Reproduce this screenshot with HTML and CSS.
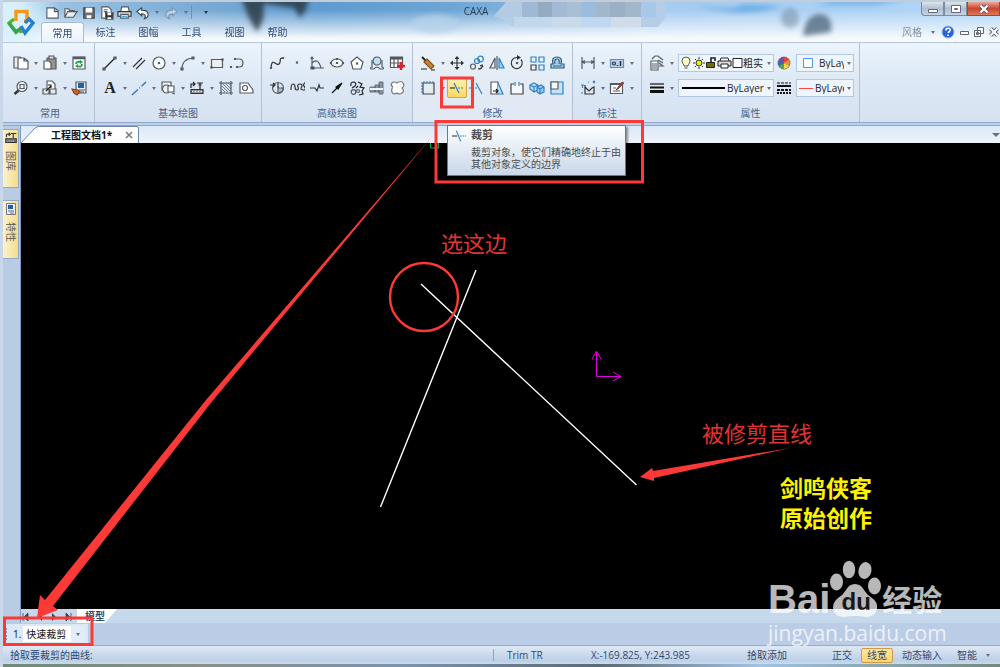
FILE: index.html
```html
<!DOCTYPE html>
<html lang="zh-CN">
<head>
<meta charset="utf-8">
<title>CAXA</title>
<link rel="stylesheet" href="styles.css">
</head>
<body>
<header class="titlebar">
  <svg class="sky" aria-hidden="true">
    <defs><filter id="soft"><feGaussianBlur stdDeviation="2.500"/></filter></defs>
    <g filter="url(#soft)">
      <path d="M238 -4h68l-3 12-6 8-6-10-30-4-1 16-6 12-8-14z" fill="#27343f" opacity=".8"/>
      <path d="M690 2q40 8 50 0l40 2q-40 14-90-2zM812 3h60l30-5h-70z" fill="#6fb0e6"/>
      <ellipse cx="787" cy="16" rx="9" ry="10" fill="#7d93a8" opacity=".6"/>
      <path d="M800 34q2-22 18-22 12 2 10 18z" fill="#4b6278" opacity=".75"/>
      <ellipse cx="432" cy="22" rx="24" ry="9" fill="#b5d2ea" opacity=".8"/>
    </g>
  </svg>
  <button class="logo" aria-label="菜单">
    <svg width="28" height="28" viewBox="0 0 28 28" fill="none" stroke-width="3.4">
      <path d="M9 13V3.500h11V13M17 13h4" stroke="#f39a1c"/><path d="M7 11l-5 4 7 9 5-4M14 20v5" stroke="#55b233"/><path d="M2 15l7 9 5-4" stroke="#3aa449"/><path d="M14 18l4 7 8-10-4-4-4 4" stroke="#2581d0"/>
    </svg>
  </button>
  <div class="head-rows">
    <div class="title-row">
      <div class="qat">
        <button aria-label="新建"><svg class="i" viewBox="0 0 16 16"><path d="M2 3h8l4 3v8H2zM10 3v4h4" fill="#fff"/></svg></button>
        <button aria-label="打开"><svg class="i" viewBox="0 0 16 16"><path d="M2 13V4h4l1 2h5v2M2 13l3-6h10l-4 6z" fill="#eee"/></svg></button>
        <button aria-label="保存"><svg class="i" viewBox="0 0 16 16"><path d="M3 3h11v11H3z" fill="#6b6f78" stroke="#3b4149"/><path d="M5 3h7v5H5zM6 11h5v3H6z" fill="#fff" stroke="none"/></svg></button>
        <button aria-label="另存为"><svg class="i" viewBox="0 0 16 16"><path d="M3 2h7l3 3v9H3zM5 5h4M5 7h4" fill="#fff"/><path d="M7 8h8v7H7z" fill="#333"/><path d="M9 8h4v3H9zM9 13h4v2H9z" fill="#fff" stroke="none"/></svg></button>
        <button aria-label="打印"><svg class="i" viewBox="0 0 16 16"><path d="M4 7l1-5h7l1 5" fill="#fff"/><path d="M1 7h14v5H1z" fill="#ddd" stroke="#333"/><path d="M4 10h8v4H4z" fill="#fff"/><path d="M5 12h6" stroke="#39c"/></svg></button>
        <button aria-label="撤销"><svg class="i" viewBox="0 0 16 16"><path d="M2 7l5-4v2.500c5 0 7 2 7 5 0 2-2 4-4 4 2-3 1-5-3-5v2z" fill="#fff" stroke="#3d4650"/></svg></button>
        <button class="drop" aria-label="撤销列表"></button>
        <button aria-label="重做"><svg class="i" viewBox="0 0 16 16"><path d="M14 7L9 3v2.500c-5 0-7 2-7 5 0 2 2 4 4 4-2-3-1-5 3-5v2z" fill="#b9d3ea" stroke="#7d97b0"/></svg></button>
        <button class="drop" aria-label="重做列表"></button>
        <span class="qat-end"></span>
        <button class="drop more" aria-label="自定义快速访问"></button>
      </div>
      <div class="title"><span>CAXA</span>
        <svg class="mosaic" width="176" height="25" aria-hidden="true">
          <path d="M2 14L14 0h160v15l-8 10H22L8 16z" fill="#b5cde6"/>
          <path d="M14 0h16v15H2z" fill="#b4cbe4"/><path d="M30 0h16v15H30z" fill="#9fb9d4"/><path d="M46 0h14v15H46z" fill="#95abc1"/><path d="M60 0h15v15H60z" fill="#a2bad6"/><path d="M75 0h14v15H75z" fill="#a9bfd3"/><path d="M89 0h15v15H89z" fill="#9bbddd"/><path d="M104 0h14v15h-14z" fill="#a2b7cc"/><path d="M118 0h15v15h-15z" fill="#9bb0c5"/><path d="M133 0h16v15h-16z" fill="#a3b7cb"/><path d="M149 0h15v15h-15z" fill="#a8c8e9"/>
          <path d="M22 15h38v10H22z" fill="#c2d7ea"/><path d="M60 15h29v10H60z" fill="#cbdae8"/><path d="M89 15h30v10H89z" fill="#bfd8ef"/><path d="M119 15h30v10h-30z" fill="#d0dde8"/>
        </svg>
      </div>
      <div class="win">
        <button aria-label="最小化"><svg width="12" height="10"><path d="M1.500 5.500h9v3h-9z" fill="#fff" stroke="#667"/></svg></button>
        <button aria-label="最大化"><svg width="12" height="10"><path d="M1.500 1.500h9v7h-9z" fill="#fff" stroke="#667"/><path d="M4.500 4.500h3v1h-3z" stroke="#667" fill="none"/></svg></button>
        <button class="close" aria-label="关闭"><svg width="12" height="10"><path d="M2.500 1.500l7 7M9.500 1.500l-7 7" stroke="#656" stroke-width="4"/><path d="M2.500 1.500l7 7M9.500 1.500l-7 7" stroke="#fff" stroke-width="2"/></svg></button>
      </div>
    </div>
    <div class="tab-row">
      <nav class="tabs">
        <button class="on">常用</button><button>标注</button><button>图幅</button><button>工具</button><button>视图</button><button>帮助</button>
      </nav>
      <div class="tab-tools">
        <button class="style">风格</button><button class="drop" aria-label="风格列表"></button>
        <button aria-label="帮助"><svg width="14" height="14" viewBox="0 0 14 14"><circle cx="7" cy="7" r="6" fill="#2b62d4" stroke="#8db4e8"/><path d="M4.800 5.500c0-3 4.500-3 4.500-.5 0 1.500-2 1.500-2 3M7 9.500v1.500" stroke="#fff" stroke-width="1.600" fill="none"/></svg></button>
        <button aria-label="最小化文档"><svg width="12" height="12" fill="#fff" stroke="#5c6675"><path d="M2.500 5.500h8v3h-8z"/></svg></button>
        <button aria-label="还原文档"><svg width="12" height="12" fill="#fff" stroke="#5c6675"><path d="M4.500 1.500h6v6h-6zM1.500 4.500h6v6h-6zM3.500 6.500h2v2h-2z"/></svg></button>
        <button aria-label="关闭文档"><svg width="12" height="12"><path d="M2.500 2.500l7 7M9.500 2.500l-7 7" stroke="#5c6675" stroke-width="4"/><path d="M2.500 2.500l7 7M9.500 2.500l-7 7" stroke="#fff" stroke-width="2"/></svg></button>
      </div>
    </div>
  </div>
</header>

<section class="ribbon">
  <div class="group first">
    <div class="row">
      <button aria-label="复制"><svg class="i" viewBox="0 0 16 16"><path d="M1 2h6l2 2v9H1z" fill="#eee"/><path d="M5 3h6l4 3v8H5zM11 3v3h4" fill="#fff"/></svg></button><button class="drop" aria-label="复制选项"></button>
      <button aria-label="粘贴"><svg class="i" viewBox="0 0 16 16"><path d="M5 3h9v11H5z" fill="#9a948c"/><path d="M7 1h5v3H7z" fill="#ddd"/><path d="M2 6h5l2 2v6H2z" fill="#fff"/></svg></button><button class="drop" aria-label="粘贴选项"></button>
      <button aria-label="刷新"><svg class="i" viewBox="0 0 16 16"><path d="M2 2h12v12H2z" fill="#fff"/><path d="M2 3h12" stroke-width="2.500"/><path d="M5 9q0-3 5-2M11 9q0 4-5 2" stroke="#18a04a" stroke-width="1.800"/><path d="M9 5l3 2-3 2zM7 9l-3 2 3 2z" fill="#18a04a" stroke="none"/></svg></button>
    </div>
    <div class="row">
      <button aria-label="缩放"><svg class="i" viewBox="0 0 16 16"><circle cx="9" cy="6.500" r="5" fill="#f4f8fc"/><path d="M7 4.500h4v4H7z"/><path d="M5.500 10.500L1.500 14" stroke="#333" stroke-width="2.500"/></svg></button><button class="drop" aria-label="缩放选项"></button>
      <button aria-label="平移"><svg class="i" viewBox="0 0 16 16"><path d="M5 1h5l3 3v6H5z" fill="#fff"/><path d="M1 9h6v5H1zM8 9h6v5H8z" fill="#e8e8e8"/><path d="M4 11l5-5M6 5h3v3" stroke="#222"/></svg></button><button class="drop" aria-label="平移选项"></button>
      <button aria-label="特性匹配"><svg class="i" viewBox="0 0 16 16"><path d="M5 2h10v11H5z" fill="#e7edf5"/><path d="M7 3h6v5H7z" fill="#23629f" stroke="none"/><path d="M8 10h6M9 12h4"/><path d="M1 9l6 1 2 2-3 3-3-2z" fill="#c26a2b" stroke="#8a431a"/></svg></button>
    </div>
    <div class="label">常用</div>
  </div>
  <div class="group">
    <div class="row">
      <button aria-label="直线"><svg class="i" viewBox="0 0 16 16"><path d="M2 14L13 3" stroke="#222"/><path d="M1 13h2v2H1zM12 2h2v2h-2z" fill="#555"/></svg></button><button class="drop" aria-label="直线选项"></button>
      <button aria-label="平行线"><svg class="i" viewBox="0 0 16 16"><path d="M2 12L11 3M5 14l9-9" stroke="#333"/></svg></button>
      <button aria-label="圆"><svg class="i" viewBox="0 0 16 16"><circle cx="8" cy="8" r="6" fill="#f8fafc"/><path d="M7.500 7.500h1v1h-1z" fill="#333"/></svg></button><button class="drop" aria-label="圆选项"></button>
      <button aria-label="圆弧"><svg class="i" viewBox="0 0 16 16"><path d="M2 14Q2 4 13 3"/><path d="M1 13h2v2H1zM12 2h2v2h-2z" fill="#555"/></svg></button><button class="drop" aria-label="圆弧选项"></button>
      <button aria-label="矩形"><svg class="i" viewBox="0 0 16 16"><path d="M2.500 4.500h11v8h-11z" fill="#eee"/><path d="M2 12h1v1H2zM13 4h1v1h-1z" fill="#444" stroke="#444"/></svg></button>
      <button aria-label="多段线"><svg class="i" viewBox="0 0 16 16"><path d="M6 4h4q4 0 4 4t-4 4H8"/><path d="M5.500 3.500h1v1h-1zM1.500 11.500h1v1h-1zM7.500 11.500h1v1h-1z" fill="#555"/></svg></button>
    </div>
    <div class="row">
      <button class="text-tool" aria-label="文字">A</button><button class="drop" aria-label="文字选项"></button>
      <button aria-label="中心线"><svg class="i" viewBox="0 0 16 16"><path d="M1 15L15 2" stroke="#2b78bd" stroke-width="1.400" stroke-dasharray="8 2 1 2"/></svg></button><button class="drop" aria-label="中心线选项"></button>
      <button aria-label="块"><svg class="i" viewBox="0 0 16 16"><path d="M2 2h9v8H2z" fill="#eee"/><circle cx="6.500" cy="9" r="4" fill="#f2f2f2"/><path d="M8 6h6v6H8z" fill="#fff"/><path d="M12 13l3 1"/></svg></button><button class="drop" aria-label="块选项"></button>
      <button aria-label="图库"><svg class="i" viewBox="0 0 16 16"><path d="M2 8V4h4M4 2l2 2-2 2M8 3h6M11 3v6M9.500 5h3" stroke="#222"/><path d="M2 9.500h12v4H2z" fill="#999" stroke="#333"/><path d="M3 11.500h10" stroke="#fff" stroke-dasharray="1 2"/></svg></button><button class="drop" aria-label="图库选项"></button>
      <button aria-label="剖面线"><svg class="i" viewBox="0 0 16 16" stroke-width="1"><path d="M3 1v14M13 1v14M1 3h14M1 13h14"/><path d="M4 9l3 3M4 6l6 6M4 3l9 9M7 3l6 6M10 3l3 3" stroke-width=".8"/></svg></button>
      <button aria-label="填充"><svg class="i" viewBox="0 0 16 16"><path d="M2 3h8l5 7v3H2z" fill="#fff"/><circle cx="7" cy="8" r="2.500"/></svg></button>
    </div>
    <div class="label">基本绘图</div>
  </div>
  <div class="group">
    <div class="row">
      <button aria-label="样条"><svg class="i" viewBox="0 0 16 16"><path d="M2 13c1-12 5-1 8-4s-1-6 4-6" stroke="#333"/><path d="M1.500 12.500h1v1h-1zM13.500 2.500h1v1h-1z" fill="#555"/></svg></button>
      <button aria-label="点"><svg class="i" viewBox="0 0 16 16"><path d="M7.500 7h1v1h-1z" fill="#444"/></svg></button>
      <button aria-label="公式曲线"><svg class="i" viewBox="0 0 16 16"><path d="M3 2v11h12M1.500 4L3 2l1.500 2M3 8q6-6 9 5"/><path d="M2 12h3v2H2z" fill="#333"/></svg></button>
      <button aria-label="椭圆"><svg class="i" viewBox="0 0 16 16"><ellipse cx="8" cy="8" rx="6" ry="4" fill="#f8f8f8"/><path d="M7.500 7.500h1v1h-1zM1.500 7.500h1v1h-1zM13.500 7.500h1v1h-1zM7.500 3.500h1v1h-1z" fill="#444"/></svg></button>
      <button aria-label="正多边形"><svg class="i" viewBox="0 0 16 16"><path d="M8 2l6 5-2 7H4L2 7z" fill="#fff"/><path d="M7.500 8h1v1h-1z" fill="#333"/></svg></button>
      <button aria-label="局部放大图"><svg class="i" viewBox="0 0 16 16"><circle cx="8" cy="6" r="4" fill="#bfe0f3"/><path d="M3 5v7q-2 0-1 2h3q3-4 6 0h3q1-2-1-2V5"/></svg></button>
      <button aria-label="表格"><svg class="i" viewBox="0 0 16 16"><path d="M1.500 2.500h12v10h-12zM1.500 8h12M5 4v8M9 4v8" fill="#fff"/><path d="M1 3h13" stroke-width="3" stroke="#555"/><path d="M12 7v8M8 11h8" stroke="#d9232e" stroke-width="2.500"/></svg></button>
    </div>
    <div class="row">
      <button aria-label="圆弧拟合"><svg class="i" viewBox="0 0 16 16"><circle cx="9" cy="8" r="5.500"/><path d="M9 8h5q0 5-5 5z" fill="#9cc8de"/><path d="M1 5h5M4 3l2 2-2 2M9 8V3" stroke="#333"/></svg></button>
      <button aria-label="波浪线"><svg class="i" viewBox="0 0 16 16"><path d="M2 10q0-6 2-6t2 3 2 3 1-3 2-3 1.500 3 2 3 1-3 2-5" stroke="#333"/></svg></button>
      <button aria-label="折断线"><svg class="i" viewBox="0 0 16 16"><path d="M1 8h5l2 3 2-6 1 3h4" stroke="#333"/></svg></button>
      <button aria-label="箭头"><svg class="i" viewBox="0 0 16 16"><path d="M3 13l6-6" stroke="#111"/><path d="M13 3l-6 4 2 2z" fill="#111" stroke="#111"/></svg></button>
      <button aria-label="齿轮"><svg class="i" viewBox="0 0 16 16"><path d="M2 6q-1-4 3-4 3 1 1 4l-3 2M9 2l4 2-2 3 4 1-2 3 1 3-4 1M9 6l-2 2" stroke="#222"/><circle cx="4.500" cy="12" r="2.300"/><circle cx="9" cy="11" r="1.500"/></svg></button>
      <button aria-label="轴孔"><svg class="i" viewBox="0 0 16 16"><path d="M1 7h5v5H1zM6 5h4v7H6zM10 2h4v12h-4z" fill="#8795a6" stroke-width=".8"/><path d="M1 9h13" stroke="#eef2f6" stroke-width="2"/></svg></button>
      <button aria-label="云线"><svg class="i" viewBox="0 0 16 16"><path d="M4 7Q1 5 3 3t5 0q4-3 6 0t-1 5q3 3 0 5t-5 0q-4 2-5-1t1-5" fill="#fff" stroke="#777"/></svg></button>
    </div>
    <div class="label">高级绘图</div>
  </div>
  <div class="group modify">
    <div class="row">
      <button aria-label="删除"><svg class="i" viewBox="0 0 16 16"><path d="M2 2l4 4" stroke="#222" stroke-width="2"/><path d="M4 7l3-3 7 7-3 3z" fill="#c9852b" stroke="#83501c"/><path d="M1 14h6M11 15h4" stroke="#222"/></svg></button><button class="drop" aria-label="删除选项"></button>
      <button aria-label="平移复制"><svg class="i" viewBox="0 0 16 16"><path d="M8 3v10M3 8h10" stroke="#333"/><path d="M8 1l2.500 3h-5zM8 15l2.500-3h-5zM1 8l3-2.500v5zM15 8l-3-2.500v5z" fill="#333" stroke="none"/></svg></button>
      <button aria-label="复制对象"><svg class="i" viewBox="0 0 16 16"><g class="blue"><circle cx="11.500" cy="4" r="2.800"/><circle cx="8" cy="6" r="2.500"/></g><circle cx="4" cy="11.500" r="2.500"/><path d="M9 14q5 0 4-4M11 11l2-1 1 2" stroke="#333"/></svg></button>
      <button aria-label="镜像"><svg class="i" viewBox="0 0 16 16"><path d="M6 3v10H1z"/><path d="M10 3v10h5z" fill="#9fd0f5" stroke="#2c82c9"/><path d="M8 1v14"/></svg></button>
      <button aria-label="旋转"><svg class="i" viewBox="0 0 16 16"><path d="M8 2.500a5.500 5.500 0 1 0 4 2" stroke="#333"/><path d="M8 0l4 2.500L8 5z" fill="#333" stroke="none"/><path d="M7.500 7.500h1v1h-1z" fill="#333"/></svg></button>
      <button aria-label="阵列"><svg class="i blue" viewBox="0 0 16 16"><path d="M2 2h5v5H2zM10 2h5v5h-5zM10 10h5v5h-5z"/><path d="M2 10h5v5H2z" stroke="#444"/></svg></button>
      <button aria-label="偏移"><svg class="i" viewBox="0 0 16 16"><path d="M2 13h13v-4h-3q2-7-4-7T4 9H2z" fill="#a4d0f0" stroke="#275d8c"/><path d="M4 11h9M6 9q-1-5 2-5t2 5"/></svg></button>
    </div>
    <div class="row">
      <button aria-label="拉伸"><svg class="i" viewBox="0 0 16 16"><path d="M3 3h11v11H3z" fill="#e6ebf0" stroke="#444"/><path d="M14 2H2v12" stroke="#2c82c9" stroke-dasharray="2 1"/></svg></button><button class="drop" aria-label="拉伸选项"></button>
      <button class="active" aria-label="裁剪"><svg class="i" viewBox="0 0 16 16"><path d="M1 8h5" stroke="#333"/><path d="M5 3l5 10" stroke="#2c82c9"/><path d="M9 8h6" stroke="#2c82c9" stroke-dasharray="2 1"/></svg></button>
      <button aria-label="延伸"><svg class="i blue" viewBox="0 0 16 16"><path d="M7 3l6 11"/><path d="M0 8h8" stroke-dasharray="2 1"/></svg></button>
      <button aria-label="比例"><svg class="i" viewBox="0 0 16 16"><path d="M2 2h7v12H2z" fill="#fff"/><path d="M9 3l5 11H9" fill="#b9def7" stroke="#2c82c9"/><path d="M4 11h5M7 9l2 2-2 2" stroke="#222"/></svg></button>
      <button aria-label="打断"><svg class="i" viewBox="0 0 16 16"><path d="M5 4H2v10h12V4h-3" fill="#f4f8fc" stroke="#444"/><path d="M6 2v4M10 2v4" stroke="#2c82c9"/></svg></button>
      <button aria-label="分解"><svg class="i blue" viewBox="0 0 16 16"><path d="M1 5l4-2 4 2v5l-4 2-4-3zM1 5l4 2v5M5 7l4-2" fill="#bfe0f5"/><path d="M8 7l4-2 3 2v5l-4 2-3-2zM8 7l3 2v5M11 9l4-2" fill="#9acbed"/></svg></button>
      <button aria-label="缩放对象"><svg class="i" viewBox="0 0 16 16"><path d="M2 2h12v12H2z" fill="#c5e3f7" stroke="#2c82c9"/><path d="M2 2h7v7H2z" fill="#f4f8fc"/></svg></button>
    </div>
    <div class="label">修改</div>
  </div>
  <div class="group">
    <div class="row">
      <button aria-label="尺寸标注"><svg class="i" viewBox="0 0 16 16"><path d="M2 2v12M14 2v12M2 7h12M5 5.500L2 7l3 1.500M11 5.500L14 7l-3 1.500"/></svg></button><button class="drop" aria-label="尺寸选项"></button>
      <button aria-label="形位公差"><svg class="i" viewBox="0 0 16 16"><path d="M1.500 4.500h13v8h-13z" fill="#b8d3e8" stroke="#6f8ba6"/><circle cx="5" cy="8.500" r="1.500" stroke="#235"/><path d="M8.500 11v-1M11.500 6v5" stroke="#235" stroke-width="1.500"/></svg></button><button class="drop" aria-label="公差选项"></button>
    </div>
    <div class="row">
      <button aria-label="坐标标注"><svg class="i" viewBox="0 0 16 16"><path d="M5 5v9h9M5 14V7l4 4 3-3 2-1v7" stroke="#333"/><path d="M1 5h3M2.500 5v3M8 2h1M13 1l2 2M15 1l-2 2M1 13h2" stroke="#2c82c9"/></svg></button><button class="drop" aria-label="坐标选项"></button>
      <button aria-label="标注编辑"><svg class="i" viewBox="0 0 16 16"><path d="M1.500 3.500h12v10h-12z" fill="#fff"/><path d="M2 4h11" stroke-width="2"/><path d="M4 8h3M4 11h7"/><path d="M7 10l6-8 2 1-6 6z" fill="#9c4a2e" stroke="#7a3520" stroke-width=".8"/></svg></button><button class="drop" aria-label="编辑选项"></button>
    </div>
    <div class="label">标注</div>
  </div>
  <div class="group props">
    <div class="row">
      <button aria-label="图层"><svg class="i" viewBox="0 0 16 16"><path d="M2 6h7v9H2zM3 9h5M3 11h5M3 13h5" fill="#fff"/><path d="M3 4l3-3h3l5 4M9 5l5 3M10 8l4 3H10" /></svg></button><button class="drop" aria-label="图层选项"></button>
      <div class="combo wide">
        <svg width="62" height="14" viewBox="1 0 62 14" fill="none" stroke="#222" aria-hidden="true">
          <path d="M4 10V9Q2 7 2 5q0-4 4-4t4 4q0 2-2 4v1zM4.500 12h3" fill="#ffffc0" stroke="#555"/>
          <path d="M19 1v2M19 11v2M13 7h2M23 7h2M15 3l1 1M22 10l1 1M23 3l-1 1M15 11l1-1" stroke="#333"/><circle cx="19" cy="7" r="3" fill="#e8f000" stroke="#333"/>
          <path d="M26.500 6.500h8v5h-8z" fill="#6f7000"/><path d="M31 6V2h4v3" stroke-width="1.600"/>
          <path d="M40 5l1-3h7l1 3" fill="#fff"/><path d="M38 5h13v5H38z" fill="#ddd"/><path d="M41 8h7v4h-7z" fill="#fff"/>
          <path d="M53 2.500h9v9h-9z" fill="#fff"/>
        </svg>
        <select aria-label="图层"><option>粗实</option></select><span class="arrow"></span>
      </div>
      <button aria-label="颜色"><svg width="14" height="14" viewBox="0 0 14 14"><circle cx="7" cy="7" r="6.500" fill="#777"/><path d="M7 7V1a6 6 0 0 1 5 3z" fill="#e84040"/><path d="M7 7l5-3a6 6 0 0 1 0 6z" fill="#f0902c"/><path d="M7 7l5 3a6 6 0 0 1-5 3z" fill="#ecd940"/><path d="M7 7v6a6 6 0 0 1-5-3z" fill="#44b04a"/><path d="M7 7l-5 3a6 6 0 0 1 0-6z" fill="#3268c8"/><path d="M7 7L2 4a6 6 0 0 1 5-3z" fill="#7c4aa8"/></svg></button>
      <div class="combo narrow">
        <svg width="20" height="12" aria-hidden="true"><path d="M4.500 1.500h9v9h-9z" fill="#fff" stroke="#4d97e8"/></svg>
        <select aria-label="颜色"><option>ByLayer</option></select><span class="arrow"></span>
      </div>
    </div>
    <div class="row">
      <button aria-label="线宽"><svg class="i" viewBox="0 0 16 16"><path d="M1 4h14" stroke="#111"/><path d="M1 7.500h14" stroke="#111" stroke-width="2"/><path d="M1 11.500h14" stroke="#111" stroke-width="3"/></svg></button><button class="drop" aria-label="线宽选项"></button>
      <div class="combo wide">
        <svg width="46" height="12" aria-hidden="true"><path d="M1 6h43" stroke="#000" stroke-width="2"/></svg>
        <select aria-label="线宽"><option>ByLayer</option></select><span class="arrow"></span>
      </div>
      <button aria-label="线型"><svg class="i" viewBox="0 0 16 16"><path d="M1 3h14" stroke="#111" stroke-dasharray="3 1"/><path d="M1 6h14" stroke="#111" stroke-width="2"/><path d="M1 10h14" stroke="#111" stroke-width="2" stroke-dasharray="3 1"/><path d="M1 13h14" stroke="#111" stroke-width="2" stroke-dasharray="2 1"/></svg></button>
      <div class="combo narrow">
        <svg width="16" height="12" aria-hidden="true"><path d="M0 6.500h14" stroke="#f44"/></svg>
        <select aria-label="线型"><option>ByLayer</option></select><span class="arrow"></span>
      </div>
    </div>
    <div class="label">属性</div>
  </div>
</section>

<main class="work">
  <aside class="dock">
    <button><svg width="12" height="12" viewBox="0 0 16 16" fill="none" stroke="#333" stroke-width="1.500"><path d="M2 7V3h4M5 1l2 2-2 2M8 2h7M11 2v6"/><path d="M1 9h14v5H1z" fill="#777"/><path d="M2 12h12" stroke="#eee" stroke-dasharray="1 2"/></svg><span>图库</span></button>
    <button><svg width="12" height="12" viewBox="0 0 12 12" fill="none"><path d="M1.500.5h9v11h-9z" fill="#eef" stroke="#778"/><path d="M3 2h5v4H3z" fill="#1f5fae"/><path d="M3 8h6M5 10h4" stroke="#667"/></svg><span>特性</span></button>
  </aside>
  <div class="doc">
    <div class="doc-tabs">
      <div class="doc-tab">
        <svg width="118" height="17" aria-hidden="true"><path d="M0 17L14 2q2-1.500 4-1.500h98q1.500 0 1.500 2V17" fill="#fff" stroke="#6f86a8"/></svg>
        <span>工程图文档1*</span><button aria-label="关闭文档标签"><svg width="8" height="8"><path d="M1 1l6 6M7 1L1 7" stroke="#777" stroke-width="1.500"/></svg></button>
      </div>
      <button class="drop" aria-label="文档列表"></button>
    </div>
    <div class="canvas">
      <svg class="drawing" aria-label="图形">
        <g transform="translate(-21 -143)" fill="none">
          <path d="M476 270L380.500 507M421 284L636.500 485" stroke="#fff" stroke-width="1.400"/>
          <path d="M596.500 352v24.500H621M592 359l4.500-8 4.500 8M613 372l8 4.500-8 4.500" stroke="#e000e0"/>
          <path d="M430.500 140v8h8v-8" stroke="#00b050"/>
        </g>
      </svg>
      <p class="note pick">选这边</p>
      <p class="note target">被修剪直线</p>
      <p class="author">剑鸣侠客<br>原始创作</p>
    </div>
    <div class="sheets">
      <div class="sheet-nav">
        <button aria-label="第一个"><svg width="8" height="8"><path d="M1 0v8M6 0v8L2 4z" fill="#345" stroke="#345" stroke-width=".8"/></svg></button>
        <button aria-label="上一个"><svg width="8" height="8"><path d="M6 0v8L2 4z" fill="#345"/></svg></button>
        <button aria-label="下一个"><svg width="8" height="8"><path d="M2 0v8l4-4z" fill="#345"/></svg></button>
        <button aria-label="最后一个"><svg width="8" height="8"><path d="M7 0v8M2 0v8l4-4z" fill="#345" stroke="#345" stroke-width=".8"/></svg></button>
      </div>
      <button class="sheet">模型</button>
    </div>
  </div>
</main>

<section class="command">
  <div class="option">
    <span class="grip"></span>
    <label for="mode">1.</label>
    <select id="mode"><option>快速裁剪</option></select>
    <span class="arrow"></span>
  </div>
</section>

<footer class="status">
  <span class="prompt">拾取要裁剪的曲线:</span>
  <span class="cmd">Trim TR</span>
  <span class="coords">X:-169.825, Y:243.985</span>
  <span class="pickmode">拾取添加</span>
  <button>正交</button><button class="on">线宽</button><button>动态输入</button><button>智能</button>
  <button class="drop" aria-label="捕捉模式"></button>
</footer>
<div class="desktop"></div>

<div class="tooltip" role="tooltip">
  <svg width="14" height="14" viewBox="0 0 16 16" fill="none" stroke="#2c82c9" stroke-width="1.200"><path d="M0 8h6" stroke="#333"/><path d="M5 2l5 12"/><path d="M9 8h7" stroke-dasharray="2 1"/></svg>
  <div><b>裁剪</b><p>裁剪对象，使它们精确地终止于由<br>其他对象定义的边界</p></div>
</div>

<div class="watermark">
  <div class="brand">
    <span>Bai</span>
    <div class="paw">
      <svg width="52" height="58" viewBox="829 560 52 58" fill="#fff" aria-hidden="true"><ellipse cx="835.500" cy="582" rx="6.500" ry="8.500"/><ellipse cx="848" cy="569.500" rx="6.200" ry="8.800"/><ellipse cx="864" cy="570.500" rx="6.500" ry="8.500" transform="rotate(12 864 570.500)"/><ellipse cx="873.500" cy="586" rx="6.500" ry="8.500"/><path d="M854 584q6 0 9 6 3 5 8 8 6 4 5 11-2 8-11 8-5-1-11-1t-11 1q-10 0-11-9 0-6 5-10 5-3 8-8 3-6 9-6z"/></svg>
      <em>du</em>
    </div>
    <b>经验</b>
  </div>
  <a href="#">jingyan.baidu.com</a>
</div>

<svg class="marks" aria-hidden="true">
  <g fill="none" stroke="#fb3a38" stroke-width="3">
    <path d="M441.500 78h31v29h-31zM436 121.500h206.500V182H436zM4.500 618h87.500v26.500H4.500z"/>
    <circle cx="424" cy="297" r="34" stroke-width="2.400"/>
  </g>
  <path d="M435 133L210 404 53 606l5 4-21 8 3-23 5 5L206 400z" fill="#fb3a38"/>
  <path d="M790 448L654 478v3l-14-4 12-9 1 3z" fill="#fb3a38"/>
</svg>
</body>
</html>
```
FILE: styles.css
```css
* { box-sizing: border-box; }
body {
  margin: 0;
  min-height: 100vh;
  display: flex;
  flex-direction: column;
  position: relative;
  padding-left: 3px;
  overflow: hidden;
  background: #c9d7e9;
  color: #2f4a73;
  font: 10px/12px "Open Sans", "Noto Sans CJK SC", sans-serif;
}
button, select {
  font: inherit;
  color: inherit;
  background: none;
  border: 0;
  padding: 0;
  margin: 0;
}
p { margin: 0; }
svg { display: block; flex: none; }
select { appearance: none; min-width: 0; }
.i { width: 16px; height: 16px; fill: none; stroke: #555b64; stroke-width: 1.2; }
.blue { stroke: #2c82c9; }
.drop { width: 9px; align-self: stretch; display: grid; place-items: center; }
.drop::before, .arrow::before {
  content: "";
  display: block;
  border: 2px solid transparent;
  border-top: 3px solid #67707c;
  border-bottom: 0;
}

/* title bar */
.titlebar {
  position: relative;
  display: flex;
  height: 43px;
  border-top: 2px solid #c3cdd9;
  border-bottom: 1px solid #b7c7dc;
  background:
    radial-gradient(circle at 8px 16px, #d8f0fc 0 14px, transparent 50px),
    linear-gradient(to bottom, transparent 20%, #f7fafd 92%),
    linear-gradient(to right, #a3cbea 0, #7aaad4 20%, #5f9bcf 32%, #6da6d5 45%, #a4cbf0 65%, #b2d6f6 100%);
}
.sky { position: absolute; left: 0; top: 0; width: 100%; height: 100%; }
.logo { position: relative; width: 38px; display: flex; padding: 6px 0 0 4px; }
.head-rows { position: relative; flex: 1; display: flex; flex-direction: column; justify-content: space-between; min-width: 0; }
.title-row { display: flex; height: 20px; }
.qat { display: flex; align-items: center; padding-left: 2px; }
.qat button { width: 18px; display: grid; place-items: center; }
.qat .drop { width: 11px; }
.qat-end { width: 1px; height: 14px; background: #7891ab; margin-right: 8px; }
.more::before { border-top-color: #333; }
.qat .i { width: 15px; height: 15px; }
.title { flex: 1; display: flex; justify-content: center; gap: 4px; color: #2b3b4d; }
.title span { padding-top: 3px; }
.win { display: flex; align-items: flex-start; }
.win button {
  width: 23px;
  height: 14px;
  display: grid;
  place-items: center;
  border: 1px solid #7b8ba0;
  border-top: 0;
  background: linear-gradient(#dbe5ef, #aebfd2 50%, #c5d4e4);
}
.win button:first-child { border-bottom-left-radius: 4px; }
.win .close { width: 33px; background: linear-gradient(#e8a99a, #c9452e 50%, #dd7a58); border-color: #a04538; }
.tab-row { display: flex; justify-content: space-between; height: 20px; }
.tabs { display: flex; }
.tabs button { width: 43px; height: 20px; }
.tabs .on {
  border: 1px solid #a7bddb;
  border-bottom: 0;
  border-radius: 3px 3px 0 0;
  background: linear-gradient(#fbfdff, #eaf2fb);
}
.tab-tools { display: flex; align-items: center; gap: 3px; }
.style { color: #8490a4; margin-right: 3px; }
.tab-tools .drop { margin-right: 1px; }

/* ribbon */
.ribbon {
  display: flex;
  height: 80px;
  background: linear-gradient(#ecf4fc, #dce8f5 50%, #d6e2f1);
  border-bottom: 1px solid #8fa8cc;
}
.group { display: flex; flex-direction: column; padding: 10px 5px 0; border-right: 1px solid #b2c0d3; }
.group.first { padding-left: 8px; }
.modify { background: #e9eff680; }
.row { display: flex; height: 20px; margin-bottom: 5px; align-items: center; }
.row > button { width: 20px; height: 20px; display: grid; place-items: center; }
.row > .drop { width: 9px; }
.row .active { border: 1px solid #c8a850; border-radius: 2px; background: linear-gradient(#fdf0b4, #ffd95e); }
.row .text-tool { font: bold 16px/20px "Liberation Serif", serif; color: #222; }
.label { text-align: center; padding-top: 4px; color: #4a6288; }
.combo {
  display: flex;
  align-items: center;
  height: 18px;
  padding-left: 2px;
  border: 1px solid #b4c7e0;
  background: #eef5fc;
  color: #222;
}
.wide { width: 96px; margin-left: 2px; }
.narrow { width: 58px; margin-left: 2px; }
.combo select { flex: 1; overflow: hidden; }
.arrow { width: 9px; flex: none; display: grid; place-items: center; }

/* work area */
.work { flex: 1; display: flex; border-top: 2px solid #bdd0ea; min-height: 0; }
.dock { width: 18px; display: flex; flex-direction: column; gap: 12px; padding-top: 3px; background: #b9cce6; border-right: 1px solid #7f9ac2; border-top: 1px solid #8fa8cc; }
.dock button {
  width: 16px;
  height: 59px;
  display: flex;
  flex-direction: column;
  align-items: center;
  gap: 7px;
  padding-top: 2px;
  border: 1px solid #92a9c4;
  border-left: 0;
  background: linear-gradient(to right, #fbf3cf, #f5dc8c);
  color: #555;
}
.dock span { writing-mode: vertical-rl; text-orientation: sideways; }
.doc { flex: 1; display: flex; flex-direction: column; min-width: 0; }
.doc-tabs { display: flex; justify-content: space-between; height: 18px; background: linear-gradient(#dbe8f7, #eef4fb); border-top: 1px solid #8fa8cc; }
.doc-tab { position: relative; display: flex; align-items: center; gap: 13px; padding-left: 30px; color: #111; font-weight: bold; }
.doc-tab > svg { position: absolute; left: 0; top: 0; }
.doc-tab span, .doc-tab button { position: relative; }
.doc-tabs > .drop::before { border-width: 4px 4px 0; }
.canvas { position: relative; flex: 1; background: #000; }
.drawing { position: absolute; left: 0; top: 0; width: 100%; height: 100%; }
.note { position: absolute; font-size: 22px; line-height: 26px; color: #e23434; white-space: nowrap; }
.pick { left: 420px; top: 87px; }
.target { left: 681px; top: 277px; }
.author { position: absolute; left: 759px; top: 329px; color: #fff200; font: bold 23px/30px "Noto Sans CJK SC", sans-serif; }
.sheets { display: flex; height: 14px; background: #c6d8ec; }
.sheet-nav { display: flex; gap: 6px; padding: 4px 5px 0 1px; }
.sheet-nav button { height: 8px; }
.sheet { width: 40px; padding-right: 4px; background: #fff; clip-path: polygon(0 0, 100% 0, 70% 100%, 0 100%); font-weight: bold; }

/* command options and status */
.command { height: 22px; background: #bbcde6; display: flex; align-items: center; }
.option { display: flex; align-items: center; height: 20px; padding-right: 3px; background: #dce8f6; color: #111; }
.grip { width: 2px; height: 12px; margin-left: 2px; border-left: 2px dotted #7f93b0; }
.option label { padding: 0 2px 0 6px; }
.option select { width: 48px; height: 16px; padding-left: 3px; background: #fff; }
.option .arrow { width: 14px; height: 16px; background: #e3edf8; }
.status {
  display: flex;
  align-items: center;
  gap: 3px;
  height: 19px;
  border-top: 1px solid #93abd2;
  background: linear-gradient(#dfe9f5, #bdd0e6 80%, #cbdaec);
}
.prompt { flex: 1; padding-left: 7px; }
.cmd { width: 95px; padding-left: 13px; border-left: 1px solid #8fa5c0; }
.coords { width: 153px; }
.pickmode { width: 76px; }
.status button { width: 32px; height: 15px; white-space: nowrap; }
.status button:nth-last-child(3) { width: 52px; }
.status .on { border: 1px solid #d09a48; border-radius: 2px; background: linear-gradient(#ffe7a0, #ffd56a); }
.status .drop { width: 14px; padding-right: 10px; align-self: center; }
.desktop { height: 3px; background: linear-gradient(to right, #6f8b76, #8b8f86 20%, #7a93ad 40%, #5c6a74 60%, #9ec4e4 76%, #74887c); }

.tooltip {
  position: absolute;
  left: 447px;
  top: 125px;
  display: flex;
  gap: 5px;
  width: 179px;
  height: 51px;
  padding: 3px 4px;
  border: 1px solid #767676;
  background: linear-gradient(#fff, #c9d7e9);
  box-shadow: 2px 2px 2px #0006;
  color: #4c4c4c;
  white-space: nowrap;
}
.tooltip b { display: block; font-size: 11px; margin-bottom: 5px; }
.watermark { position: absolute; left: 768px; top: 560px; color: #fff; opacity: .72; }
.brand { display: flex; align-items: flex-end; height: 58px; }
.brand > span { font: bold 40px/38px "Liberation Sans", sans-serif; }
.paw { position: relative; }
.paw em { position: absolute; left: 0; right: 0; bottom: 4px; text-align: center; font: bold 24px/24px "Liberation Sans", sans-serif; color: #222; }
.brand > b { font: bold 30px/34px "Liberation Sans", "Noto Sans CJK SC", sans-serif; }
.watermark a { display: block; color: inherit; text-decoration: none; font-size: 21px; line-height: 30px; }
.marks { position: absolute; left: 0; top: 0; width: 100%; height: 100%; pointer-events: none; }
```
